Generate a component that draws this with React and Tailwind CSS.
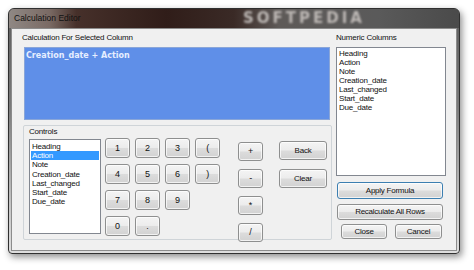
import React from "react";

const F = { fontFamily: '"Liberation Sans", Arial, sans-serif' };

function Btn({ children, className = "" }) {
  return (
    <div
      className={
        "flex items-center justify-center rounded-[3px] border border-[#8e8f8f] bg-[linear-gradient(180deg,#f4f4f4_0%,#ececec_48%,#dcdcdc_52%,#d2d2d2_100%)] text-[8px] tracking-[-0.25px] text-[#111] leading-none shadow-[inset_0_0_0_1px_rgba(255,255,255,0.7)] " +
        className
      }
    >
      {children}
    </div>
  );
}

const items = ["Heading", "Action", "Note", "Creation_date", "Last_changed", "Start_date", "Due_date"];

export default function App() {
  return (
    <div style={F} className="w-[474px] h-[270px] bg-white pt-[8px] pl-[8px] overflow-hidden">
      <div className="w-[452px] h-[246px] rounded-t-[6px] rounded-b-[4px] border border-[#303030] shadow-[2px_3px_7px_rgba(0,0,0,0.45)] overflow-hidden flex flex-col bg-[linear-gradient(180deg,#5c5c5c_0%,#7a7a7a_40%,#c4c4c4_80%,#dedede_100%)]">
        {/* title bar */}
        <div className="relative h-[19px] shrink-0 flex items-center pl-[5px] bg-[linear-gradient(90deg,#8f8884_0%,#7a6a64_9%,#46302a_15%,#301d19_35%,#3a2a26_50%,#5e5a58_60%,#5a5a5a_82%,#4a4a4a_100%)]">
          <span className="text-[8.5px] text-[#111] leading-none">Calculation Editor</span>
          <span className="absolute left-[234px] top-[2px] text-[15px] font-bold tracking-[3px] text-[#bdb8b5] leading-none blur-[0.9px]" style={{ fontFamily: '"DejaVu Sans", sans-serif' }}>
            SOFTPEDIA
          </span>
        </div>
        {/* client */}
        <div className="flex-1 px-[2px] pb-[2px]">
          <div className="h-full border border-[#8c8c8c] bg-[#f0f0f0] flex pl-[10px] pt-[4px] gap-[4px]">
            {/* left column */}
            <div className="w-[310px] flex flex-col">
              <div className="h-[10px] text-[8px] tracking-[-0.2px] leading-[10px] text-[#111]">Calculation For Selected Column</div>
              <div className="mt-[4px] ml-[2px] w-[306px] h-[73px] bg-[#5f8fe8] border border-[#8aa6d8] px-[1px] pt-[3px]">
                <div className="text-[8px] font-bold text-[#e6eeff] leading-[10px]" style={{ fontFamily: '"DejaVu Sans", sans-serif' }}>
                  Creation_date + Action
                </div>
              </div>
              <div className="mt-[5px] ml-[1px] w-[309px] h-[115px] border border-[#cfd4d8] rounded-[2px] pl-[5px] pt-[1px]">
                <div className="h-[10px] text-[8px] tracking-[-0.2px] leading-[10px] text-[#111]">Controls</div>
                <div className="mt-[2px] flex items-start">
                  <div className="w-[72px] h-[95px] bg-white border border-[#828790] pt-[2px] px-[1px]">
                    {items.map((t) => (
                      <div
                        key={t}
                        className={
                          "h-[9.2px] leading-[9.2px] text-[8px] tracking-[-0.2px] pl-[1px] " +
                          (t === "Action" ? "bg-[#3399ff] text-white" : "text-[#111]")
                        }
                      >
                        {t}
                      </div>
                    ))}
                  </div>
                  <div className="ml-[4px] -mt-[1px] grid grid-cols-[25px_25px_25px_25px] grid-rows-[20px_20px_20px_20px] gap-x-[5px] gap-y-[6px] [&>div]:text-[9px]">
                    <Btn>1</Btn>
                    <Btn>2</Btn>
                    <Btn>3</Btn>
                    <Btn>(</Btn>
                    <Btn>4</Btn>
                    <Btn>5</Btn>
                    <Btn>6</Btn>
                    <Btn>)</Btn>
                    <Btn>7</Btn>
                    <Btn>8</Btn>
                    <Btn>9</Btn>
                    <div />
                    <Btn>0</Btn>
                    <Btn>.</Btn>
                  </div>
                  <div className="ml-[18px] mt-[3px] flex flex-col gap-[8px] [&>div]:text-[9px]">
                    <Btn className="w-[25px] h-[19px]">+</Btn>
                    <Btn className="w-[25px] h-[19px]">-</Btn>
                    <Btn className="w-[25px] h-[19px]">*</Btn>
                    <Btn className="w-[25px] h-[19px]">/</Btn>
                  </div>
                  <div className="ml-[16px] mt-[2px] flex flex-col gap-[9px]">
                    <Btn className="w-[48px] h-[19px]">Back</Btn>
                    <Btn className="w-[48px] h-[19px]">Clear</Btn>
                  </div>
                </div>
              </div>
            </div>
            {/* right column */}
            <div className="w-[110px] flex flex-col">
              <div className="h-[10px] text-[8px] tracking-[-0.2px] leading-[10px] text-[#111]">Numeric Columns</div>
              <div className="mt-[4px] w-[110px] h-[129px] bg-white border border-[#828790] pt-[1px] px-[1px]">
                {items.map((t) => (
                  <div key={t} className="h-[9px] leading-[9px] text-[8px] tracking-[-0.2px] pl-[1px] text-[#111]">
                    {t}
                  </div>
                ))}
              </div>
              <Btn className="mt-[6px] ml-[1px] w-[106px] h-[17px] !border-[#3c7fb1] shadow-[0_0_2px_1px_rgba(90,170,230,0.55)]">Apply Formula</Btn>
              <Btn className="mt-[5px] ml-[1px] w-[106px] h-[16px]">Recalculate All Rows</Btn>
              <div className="mt-[4px] flex">
                <Btn className="ml-[5px] w-[46px] h-[15px]">Close</Btn>
                <Btn className="ml-[8px] w-[47px] h-[15px]">Cancel</Btn>
              </div>
            </div>
          </div>
        </div>
      </div>
    </div>
  );
}
